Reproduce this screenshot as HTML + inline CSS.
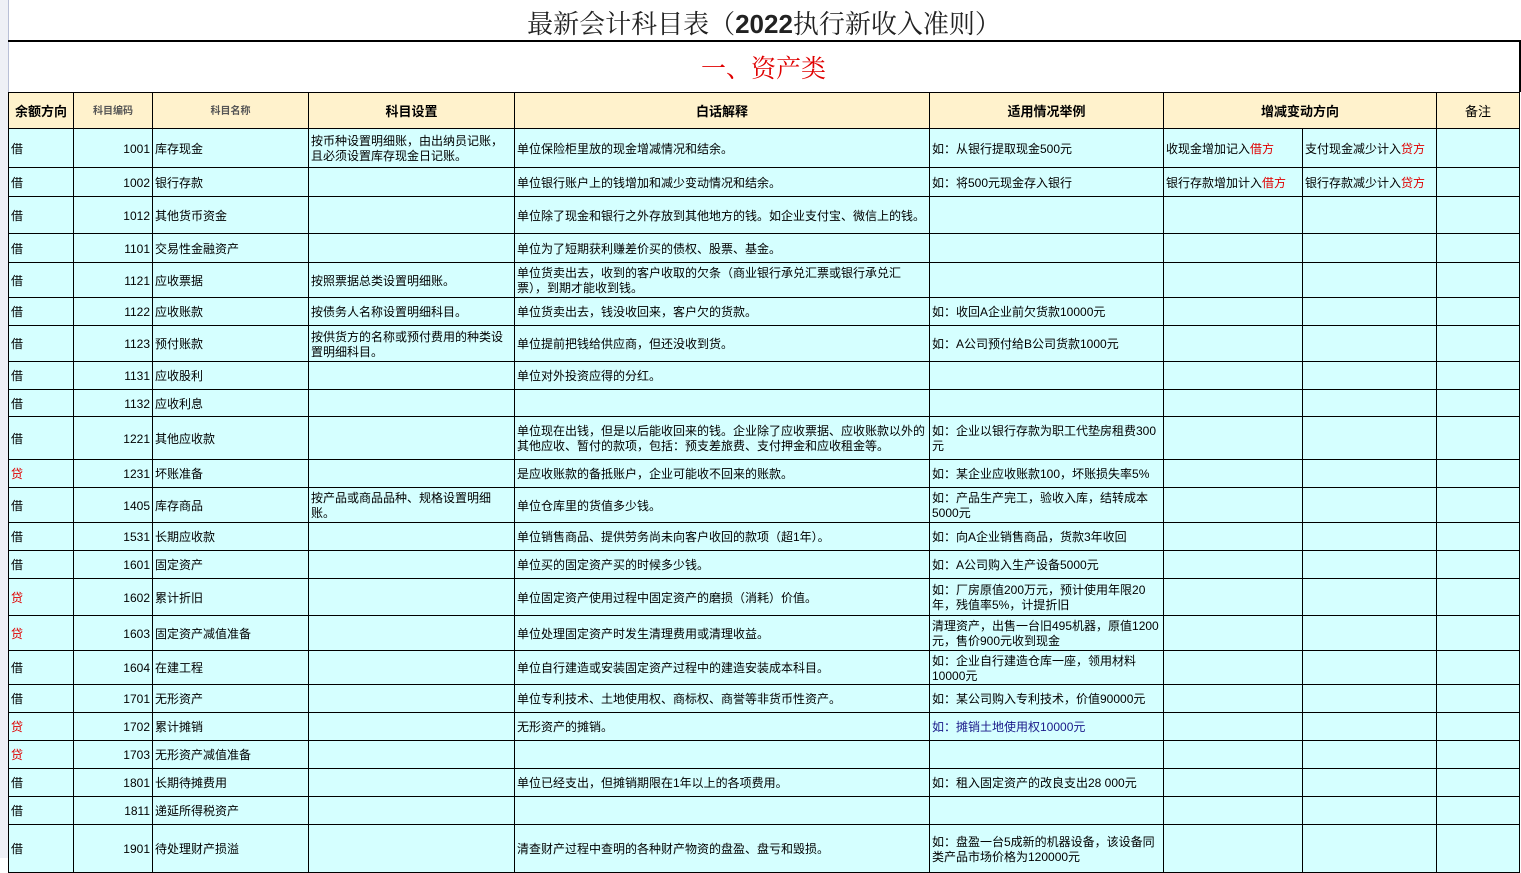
<!DOCTYPE html>
<html><head><meta charset="utf-8"><style>
body{margin:0;width:1521px;height:858px;overflow:hidden;background:#fff;font-family:"Liberation Sans","Noto Sans CJK SC",sans-serif;position:relative}
.strip{position:absolute;left:0;top:0;width:8px;height:858px;background:#eef0f6;border-right:1px solid #b8bfd6}
.title{position:absolute;left:8px;top:2px;width:1512px;height:38px;text-align:center;font-size:26px;line-height:44px;color:#222;font-family:"Liberation Serif","Noto Serif CJK SC",serif}
.title b{font-family:"Liberation Sans",sans-serif}
.thick{position:absolute;left:8px;top:40px;width:1513px;height:2px;background:#000}
.sec{position:absolute;left:8px;top:42px;width:1511px;height:50px;border-right:2px solid #000;text-align:center;color:#e00000;font-size:25px;line-height:56px;font-family:"Liberation Serif","Noto Serif CJK SC",serif}
table{position:absolute;left:8px;top:92px;border-collapse:collapse;table-layout:fixed;font-size:12px;color:#000}
td{border:1px solid #000;padding:2px 2px 0;background:#d5ffff;overflow:hidden;line-height:15px;vertical-align:middle;white-space:nowrap}
td.w{white-space:normal}
tr.h td{background:#fff2cc;text-align:center;font-weight:bold;font-size:13px}
tr.h td.s{font-size:10px;color:#555}
td.n{text-align:right}
.r{color:#e00000}
</style></head><body>
<div class="strip"></div>
<div class="title">最新会计科目表（<b>2022</b>执行新收入准则）</div>
<div class="thick"></div>
<div class="sec">一、资产类</div>
<table>
<colgroup><col style="width:65px"><col style="width:79px"><col style="width:156px"><col style="width:206px"><col style="width:415px"><col style="width:234px"><col style="width:139px"><col style="width:134px"><col style="width:83px"></colgroup>
<tr class="h" style="height:36px"><td>余额方向</td><td class="s">科目编码</td><td class="s">科目名称</td><td>科目设置</td><td>白话解释</td><td>适用情况举例</td><td colspan="2">增减变动方向</td><td style="font-weight:normal">备注</td></tr>
<tr style="height:39px"><td>借</td><td class="n">1001</td><td>库存现金</td><td class="w">按币种设置明细账，由出纳员记账，且必须设置库存现金日记账。</td><td>单位保险柜里放的现金增减情况和结余。</td><td>如：从银行提取现金500元</td><td>收现金增加记入<span class="r">借方</span></td><td>支付现金减少计入<span class="r">贷方</span></td><td></td></tr>
<tr style="height:29px"><td>借</td><td class="n">1002</td><td>银行存款</td><td></td><td>单位银行账户上的钱增加和减少变动情况和结余。</td><td>如：将500元现金存入银行</td><td>银行存款增加计入<span class="r">借方</span></td><td>银行存款减少计入<span class="r">贷方</span></td><td></td></tr>
<tr style="height:37px"><td>借</td><td class="n">1012</td><td>其他货币资金</td><td></td><td>单位除了现金和银行之外存放到其他地方的钱。如企业支付宝、微信上的钱。</td><td></td><td></td><td></td><td></td></tr>
<tr style="height:29px"><td>借</td><td class="n">1101</td><td>交易性金融资产</td><td></td><td>单位为了短期获利赚差价买的债权、股票、基金。</td><td></td><td></td><td></td><td></td></tr>
<tr style="height:35px"><td>借</td><td class="n">1121</td><td>应收票据</td><td>按照票据总类设置明细账。</td><td class="w">单位货卖出去，收到的客户收取的欠条（商业银行承兑汇票或银行承兑汇票），到期才能收到钱。</td><td></td><td></td><td></td><td></td></tr>
<tr style="height:28px"><td>借</td><td class="n">1122</td><td>应收账款</td><td>按债务人名称设置明细科目。</td><td>单位货卖出去，钱没收回来，客户欠的货款。</td><td>如：收回A企业前欠货款10000元</td><td></td><td></td><td></td></tr>
<tr style="height:36px"><td>借</td><td class="n">1123</td><td>预付账款</td><td class="w">按供货方的名称或预付费用的种类设置明细科目。</td><td>单位提前把钱给供应商，但还没收到货。</td><td>如：A公司预付给B公司货款1000元</td><td></td><td></td><td></td></tr>
<tr style="height:28px"><td>借</td><td class="n">1131</td><td>应收股利</td><td></td><td>单位对外投资应得的分红。</td><td></td><td></td><td></td><td></td></tr>
<tr style="height:27px"><td>借</td><td class="n">1132</td><td>应收利息</td><td></td><td></td><td></td><td></td><td></td><td></td></tr>
<tr style="height:43px"><td>借</td><td class="n">1221</td><td>其他应收款</td><td></td><td class="w">单位现在出钱，但是以后能收回来的钱。企业除了应收票据、应收账款以外的其他应收、暂付的款项，包括：预支差旅费、支付押金和应收租金等。</td><td class="w">如：企业以银行存款为职工代垫房租费300元</td><td></td><td></td><td></td></tr>
<tr style="height:28px"><td class="r">贷</td><td class="n">1231</td><td>坏账准备</td><td></td><td>是应收账款的备抵账户，企业可能收不回来的账款。</td><td>如：某企业应收账款100，坏账损失率5%</td><td></td><td></td><td></td></tr>
<tr style="height:35px"><td>借</td><td class="n">1405</td><td>库存商品</td><td class="w">按产品或商品品种、规格设置明细账。</td><td>单位仓库里的货值多少钱。</td><td class="w">如：产品生产完工，验收入库，结转成本5000元</td><td></td><td></td><td></td></tr>
<tr style="height:28px"><td>借</td><td class="n">1531</td><td>长期应收款</td><td></td><td>单位销售商品、提供劳务尚未向客户收回的款项（超1年）。</td><td>如：向A企业销售商品，货款3年收回</td><td></td><td></td><td></td></tr>
<tr style="height:28px"><td>借</td><td class="n">1601</td><td>固定资产</td><td></td><td>单位买的固定资产买的时候多少钱。</td><td>如：A公司购入生产设备5000元</td><td></td><td></td><td></td></tr>
<tr style="height:37px"><td class="r">贷</td><td class="n">1602</td><td>累计折旧</td><td></td><td>单位固定资产使用过程中固定资产的磨损（消耗）价值。</td><td class="w">如：厂房原值200万元，预计使用年限20年，残值率5%，计提折旧</td><td></td><td></td><td></td></tr>
<tr style="height:35px"><td class="r">贷</td><td class="n">1603</td><td>固定资产减值准备</td><td></td><td>单位处理固定资产时发生清理费用或清理收益。</td><td class="w">清理资产，出售一台旧495机器，原值1200元，售价900元收到现金</td><td></td><td></td><td></td></tr>
<tr style="height:34px"><td>借</td><td class="n">1604</td><td>在建工程</td><td></td><td>单位自行建造或安装固定资产过程中的建造安装成本科目。</td><td class="w">如：企业自行建造仓库一座，领用材料10000元</td><td></td><td></td><td></td></tr>
<tr style="height:28px"><td>借</td><td class="n">1701</td><td>无形资产</td><td></td><td>单位专利技术、土地使用权、商标权、商誉等非货币性资产。</td><td>如：某公司购入专利技术，价值90000元</td><td></td><td></td><td></td></tr>
<tr style="height:28px"><td class="r">贷</td><td class="n">1702</td><td>累计摊销</td><td></td><td>无形资产的摊销。</td><td style="color:#1a1a8a">如：摊销土地使用权10000元</td><td></td><td></td><td></td></tr>
<tr style="height:28px"><td class="r">贷</td><td class="n">1703</td><td>无形资产减值准备</td><td></td><td></td><td></td><td></td><td></td><td></td></tr>
<tr style="height:28px"><td>借</td><td class="n">1801</td><td>长期待摊费用</td><td></td><td>单位已经支出，但摊销期限在1年以上的各项费用。</td><td>如：租入固定资产的改良支出28 000元</td><td></td><td></td><td></td></tr>
<tr style="height:28px"><td>借</td><td class="n">1811</td><td>递延所得税资产</td><td></td><td></td><td></td><td></td><td></td><td></td></tr>
<tr style="height:48px"><td>借</td><td class="n">1901</td><td>待处理财产损溢</td><td></td><td>清查财产过程中查明的各种财产物资的盘盈、盘亏和毁损。</td><td class="w">如：盘盈一台5成新的机器设备，该设备同类产品市场价格为120000元</td><td></td><td></td><td></td></tr>
</table>
</body></html>
